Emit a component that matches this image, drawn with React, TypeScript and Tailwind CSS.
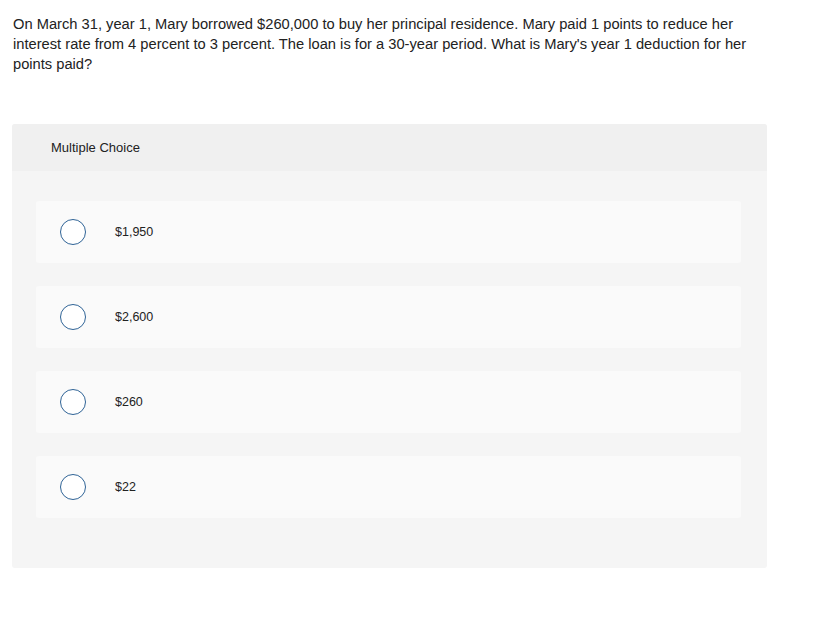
const OPTIONS = ["$1,950", "$2,600", "$260", "$22"];

export default function App() {
  return (
    <div
      className="min-h-screen bg-white text-[#222]"
      style={{ fontFamily: "'Liberation Sans', Arial, sans-serif" }}
    >
      <div className="w-[767px] pl-3 pt-[14px]">
        <p className="pl-px text-[14.7px] leading-[20px]">
          On March 31, year 1, Mary borrowed $260,000 to buy her principal residence. Mary paid 1 points to reduce her
          <br />
          interest rate from 4 percent to 3 percent. The loan is for a 30-year period. What is Mary's year 1 deduction for her
          <br />
          points paid?
        </p>

        <div className="mt-[50px] rounded-[3px] bg-[#f5f5f5] overflow-hidden">
          <div className="flex h-[47px] items-center bg-[#f0f0f0] pl-[39px] text-[13px]">
            Multiple Choice
          </div>
          <div className="flex flex-col gap-[23px] pt-[30px] pb-[50px] pl-6 pr-[26px]">
            {OPTIONS.map((o) => (
              <div
                key={o}
                className="flex h-[62px] items-center rounded-[3px] bg-[#fafafa] pl-6"
              >
                <span className="h-[26px] w-[26px] rounded-full border-[1.5px] border-[#2f6396] bg-white" />
                <span className="ml-[29px] text-[12.5px]">{o}</span>
              </div>
            ))}
          </div>
        </div>
      </div>
    </div>
  );
}
